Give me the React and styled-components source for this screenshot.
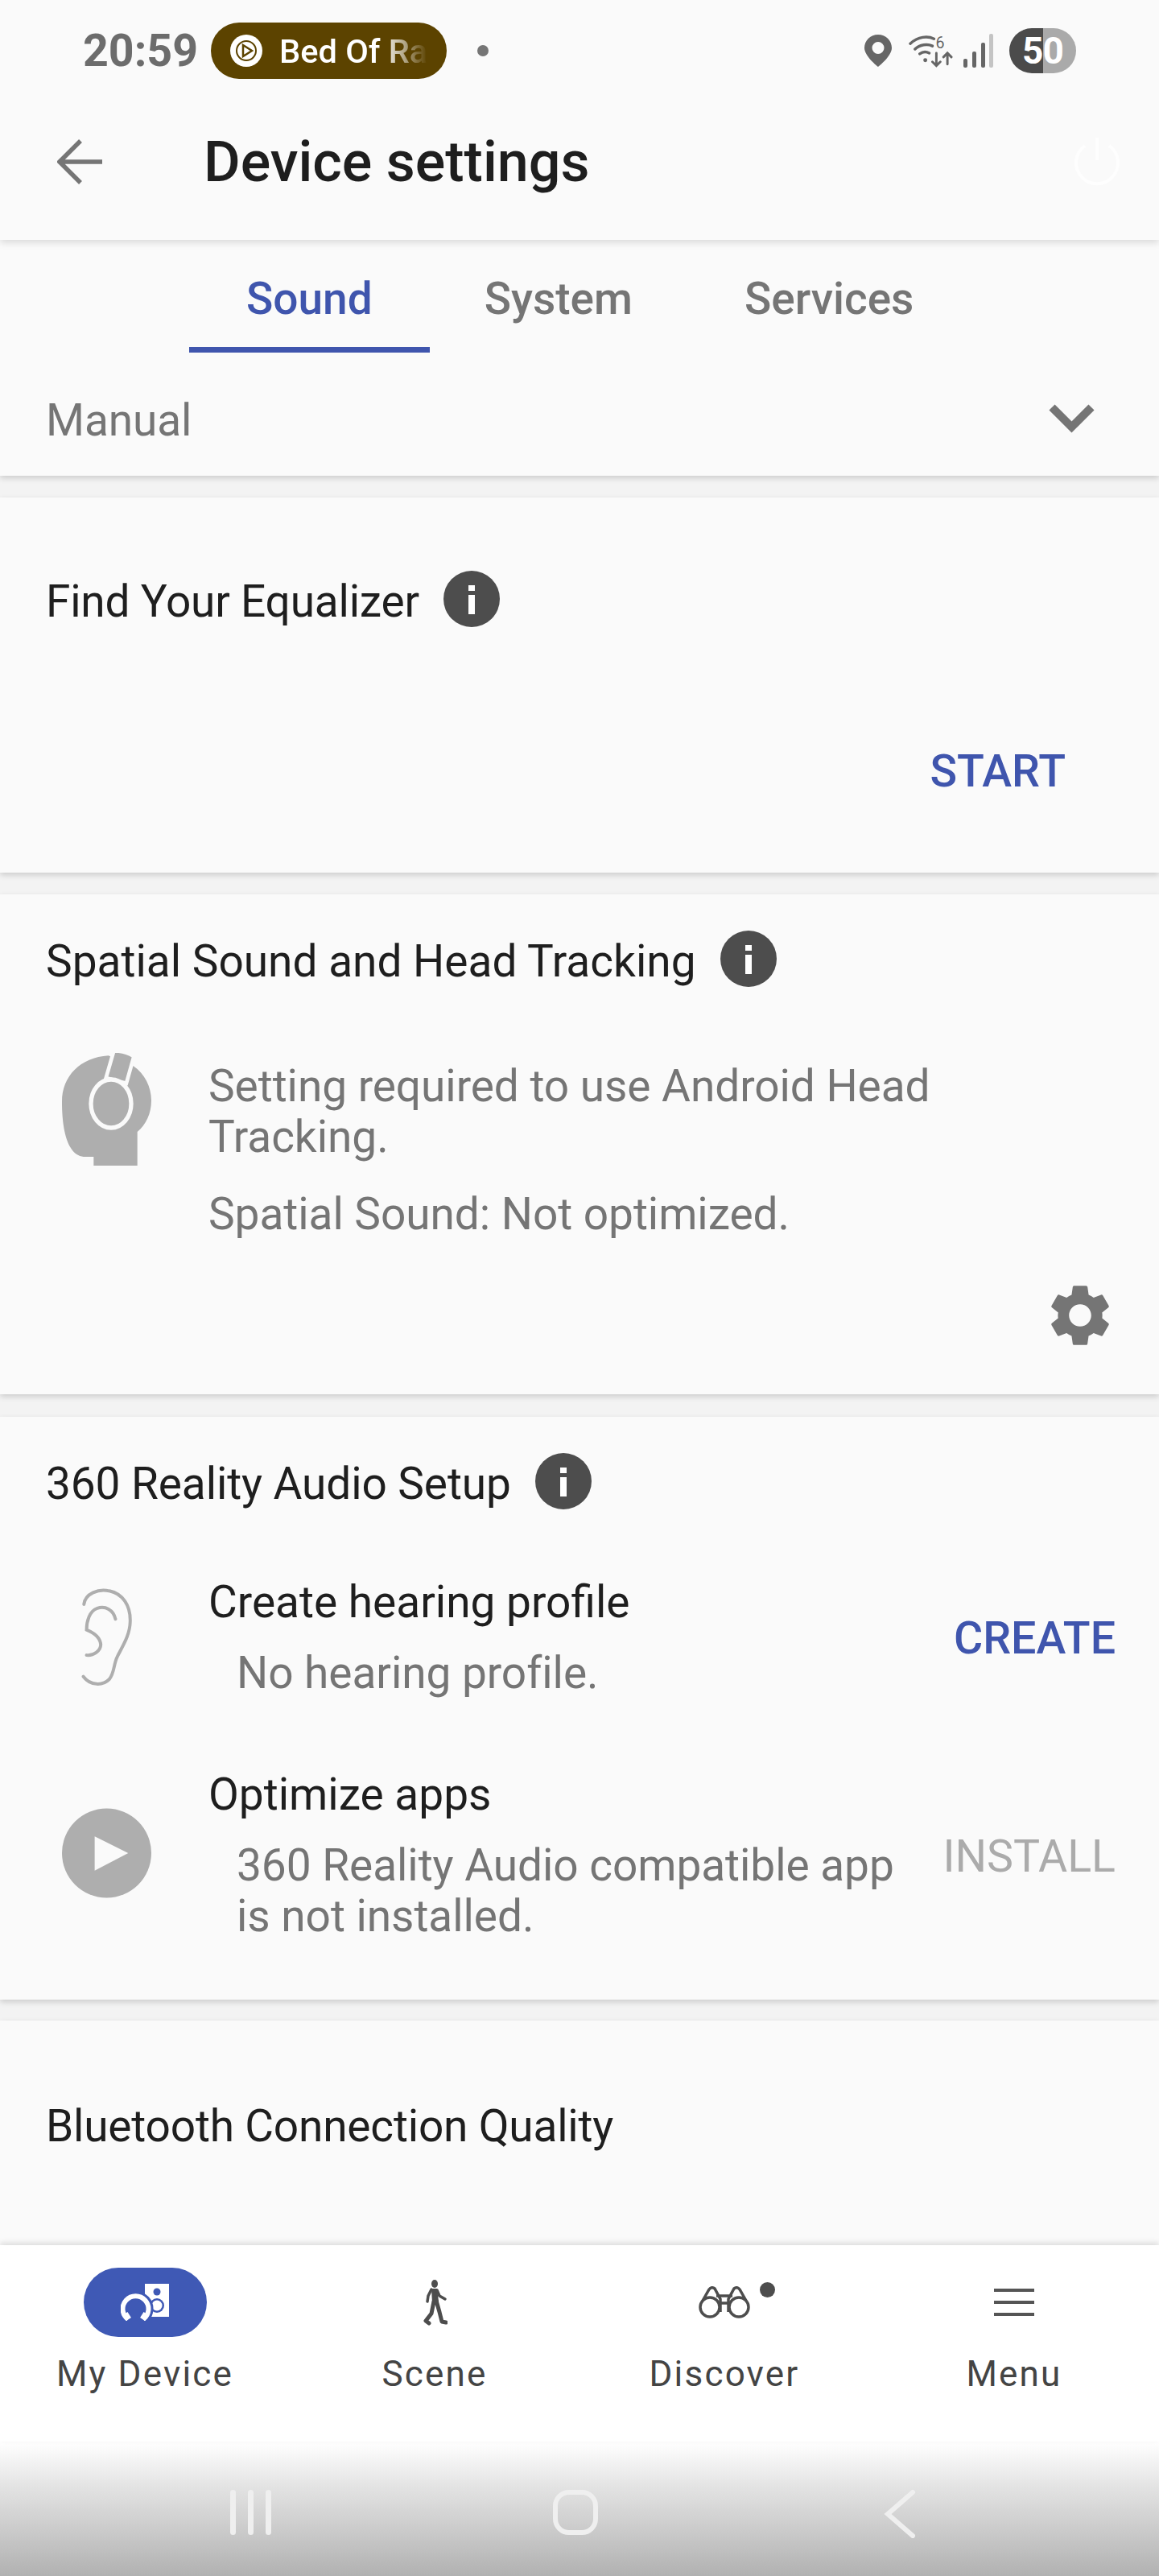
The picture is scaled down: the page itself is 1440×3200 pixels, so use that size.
import React from 'react';
import styled, { createGlobalStyle } from 'styled-components';
import { MdSettings } from 'react-icons/md';

const GlobalStyle = createGlobalStyle`
  html, body {
    margin: 0;
    padding: 0;
    background: #fafafa;
  }
  * {
    box-sizing: border-box;
  }
`;

const Screen = styled.div`
  width: 1440px;
  height: 3200px;
  display: flex;
  flex-direction: column;
  overflow: hidden;
  background: #f3f3f3;
  font-family: Roboto, "Liberation Sans", sans-serif;
`;

const TopArea = styled.header`
  height: 298px;
  padding-top: 28px;
  background: #fafafa;
  position: relative;
  z-index: 2;
  box-shadow: 0 3px 9px rgba(0, 0, 0, 0.14);
`;

const StatusBar = styled.div`
  height: 70px;
  display: flex;
  align-items: center;
  padding-left: 103px;
`;

const Clock = styled.span`
  width: 159px;
  font-size: 55.5px;
  font-weight: 700;
  color: #6c6c6c;
`;

const MediaChip = styled.div`
  width: 293px;
  height: 70px;
  border-radius: 35px;
  background: #5c4300;
  display: flex;
  align-items: center;
  padding-left: 24px;
  gap: 21px;
`;

const ChipIcon = styled.svg`
  width: 40px;
  height: 40px;
  flex: none;
`;

const ChipText = styled.div`
  white-space: nowrap;
  color: #fff;
  font-size: 41.5px;
  font-weight: 500;
  -webkit-mask-image: linear-gradient(to right, #000 68%, rgba(0, 0, 0, 0.55) 84%, transparent 100%);
  mask-image: linear-gradient(to right, #000 68%, rgba(0, 0, 0, 0.55) 84%, transparent 100%);
`;

const StatusDot = styled.span`
  width: 14px;
  height: 14px;
  margin-left: 38px;
  border-radius: 50%;
  background: #757575;
`;

const StatusIcons = styled.div`
  margin-left: auto;
  margin-right: 103px;
  display: flex;
  align-items: center;
`;

const WifiGlyph = styled.svg`
  width: 55px;
  height: 42px;
  margin-left: 21px;
`;

const SignalGlyph = styled.svg`
  width: 37px;
  height: 42px;
  margin-left: 13px;
`;

const Battery = styled.div`
  width: 83px;
  height: 56px;
  margin-left: 20px;
  border-radius: 28px;
  background: linear-gradient(to right, #4b4b4b 50%, #aaaaaa 50%);
  color: #fff;
  font-size: 46px;
  font-weight: 700;
  line-height: 56px;
  text-align: center;
  letter-spacing: -1px;
`;

const TitleBar = styled.div`
  height: 200px;
  display: flex;
  align-items: center;
  padding: 0 47px 0 71px;
`;

const BackArrow = styled.svg`
  width: 56px;
  height: 56px;
  margin-top: 5px;
  flex: none;
`;

const PageTitle = styled.h1`
  margin: 6px 0 0 126px;
  font-size: 70px;
  font-weight: 500;
  color: #1e1e1e;
`;

const PowerIcon = styled.svg`
  width: 60px;
  height: 62px;
  margin: 3px 0 0 auto;
`;

const Scroller = styled.main`
  flex: 1;
  min-height: 0;
  overflow: hidden;
`;

const SoundPanel = styled.section`
  background: #fafafa;
  box-shadow: 0 3px 7px rgba(0, 0, 0, 0.16);
`;

const TabRow = styled.nav`
  display: flex;
  padding-left: 235px;
`;

const Tab = styled.div`
  padding: 41px 71px 28px;
  border-bottom: 7px solid ${(p) => (p.$active ? '#3f55ad' : 'transparent')};
  color: ${(p) => (p.$active ? '#3f55ad' : '#757575')};
  font-size: 55px;
  font-weight: 500;
  line-height: 64px;

  & + & {
    margin-left: -3px;
  }
`;

const ModeRow = styled.div`
  display: flex;
  align-items: center;
  justify-content: space-between;
  padding: 52px 80px 37px 57px;
  color: #757575;
  font-size: 55px;
  line-height: 64px;
  letter-spacing: -0.1px;
`;

const Chevron = styled.svg`
  width: 57px;
  height: 36px;
  margin-top: -4px;
`;

const Card = styled.section`
  margin-top: ${(p) => p.$gap || 27}px;
  padding: ${(p) => p.$top}px ${(p) => p.$right || 54}px ${(p) => p.$bottom}px 57px;
  background: #fafafa;
  box-shadow: 0 3px 7px rgba(0, 0, 0, 0.16);
`;

const CardTitle = styled.div`
  display: flex;
  align-items: center;
  gap: 30px;
  color: #1e1e1e;
  font-size: 55px;
  line-height: 64px;
  letter-spacing: ${(p) => p.$track || 0}px;
`;

const InfoIcon = styled.svg`
  width: 70px;
  height: 70px;
  flex: none;
  margin-top: -6px;
`;

const StartAction = styled.div`
  margin: 148px 0 -2px;
  text-align: right;
  color: #3f55ad;
  font-size: 55.5px;
  font-weight: 500;
  line-height: 64px;
`;

const InfoRow = styled.div`
  display: flex;
  align-items: ${(p) => p.$align || 'center'};
  margin-top: ${(p) => p.$gap}px;
`;

const IconSlot = styled.div`
  width: 111px;
  margin: ${(p) => p.$lift || 0}px 71px 0 20px;
  flex: none;
  display: flex;
  justify-content: center;
`;

const InfoText = styled.div`
  flex: 1;
  min-width: 0;
  padding-top: ${(p) => p.$top || 0}px;
`;

const Note = styled.p`
  margin: ${(p) => p.$gap || 0}px 0 0;
  padding-left: ${(p) => (p.$indent ? 35 : 0)}px;
  max-width: ${(p) => (p.$indent ? 880 : 940)}px;
  color: #757575;
  font-size: 55px;
  line-height: 63px;
  letter-spacing: -0.05px;
`;

const RowTitle = styled.div`
  color: #1e1e1e;
  font-size: 55px;
  line-height: 64px;
`;

const RowAction = styled.div`
  flex: none;
  padding-top: 4px;
  color: ${(p) => (p.$disabled ? '#ababab' : '#3f55ad')};
  font-size: 55.5px;
  font-weight: ${(p) => (p.$disabled ? 400 : 500)};
  line-height: 64px;
`;

const GearRow = styled.div`
  display: flex;
  justify-content: flex-end;
  margin-top: 48px;
  color: #757575;
  margin-right: -2px;
  font-size: 92px;
  line-height: 0;
`;

const BottomNav = styled.footer`
  position: relative;
  z-index: 2;
  height: 244px;
  display: grid;
  grid-template-columns: repeat(4, 360px);
  background: #fff;
  box-shadow: 0 -3px 7px rgba(0, 0, 0, 0.12);
`;

const NavItem = styled.div`
  padding-top: 28px;
  display: flex;
  flex-direction: column;
  align-items: center;
  color: #444;
  font-size: 44px;
  line-height: 50px;
  letter-spacing: 2.2px;
`;

const NavIconSlot = styled.div`
  position: relative;
  width: 153px;
  height: 86px;
  margin-bottom: 21px;
  display: flex;
  align-items: center;
  justify-content: center;
  border-radius: 43px;
  background: ${(p) => (p.$active ? '#3f59b5' : 'transparent')};
`;

const NotifyDot = styled.span`
  position: absolute;
  top: 18px;
  right: 14px;
  width: 19px;
  height: 19px;
  border-radius: 50%;
  background: #4d4d4d;
`;

const SystemBar = styled.div`
  height: 167px;
  padding: 60px 0 0 110px;
  display: grid;
  grid-template-columns: repeat(3, 403px);
  justify-items: center;
  align-items: start;
  background: linear-gradient(to bottom, #fff 0%, #e2e2e2 35%, #b1b1b1 100%);
`;

const RecentBars = styled.div`
  height: 56px;
  display: flex;
  gap: 15px;
`;

const RecentBar = styled.span`
  width: 7px;
  border-radius: 4px;
  background: #efefef;
`;

const HomeButton = styled.div`
  width: 56px;
  height: 56px;
  border: 6px solid #efefef;
  border-radius: 20px;
`;

const BackGesture = styled.svg`
  width: 40px;
  height: 60px;
`;

const Info = () => (
  <InfoIcon viewBox="0 0 70 70">
    <circle cx="35" cy="35" r="35" fill="#4d4d4d" />
    <rect x="31" y="18" width="8" height="7" fill="#fff" />
    <rect x="31" y="30" width="8" height="24" fill="#fff" />
  </InfoIcon>
);

const HeadTracking = () => (
  <svg width="111" height="140" viewBox="232 203 333 420">
    <path
      fill="#aeaeae"
      d="M405 213C300 220 232 290 232 385C232 450 240 590 320 590L350 590L350 623L513 623L513 497C545 470 565 430 565 380C565 330 540 280 498 252Z"
    />
    <path fill="#aeaeae" stroke="#fafafa" strokeWidth="14" d="M425 196Q465 193 500 216L472 316L396 296Z" />
    <ellipse cx="415" cy="392" rx="75" ry="90" fill="#aeaeae" stroke="#fafafa" strokeWidth="16" />
  </svg>
);

const Ear = () => (
  <svg width="67" height="123" viewBox="300 205 200 370" fill="none" stroke="#aeaeae" strokeWidth="12" strokeLinecap="round">
    <path d="M315 265C320 225 370 205 410 215C460 225 490 270 488 330C487 380 460 420 440 460C425 490 430 520 410 545C385 570 340 570 313 535" />
    <path d="M433 320C425 285 395 270 365 280C335 290 325 330 325 360C350 370 375 385 378 415C378 440 350 458 325 455" />
  </svg>
);

const PlayBadge = () => (
  <svg width="112" height="112" viewBox="0 0 112 112">
    <circle cx="56" cy="56" r="56" fill="#aeaeae" />
    <path d="M41 35L83 56L41 78Z" fill="#fafafa" />
  </svg>
);

const DeviceGlyph = () => (
  <svg width="60" height="46" viewBox="0 0 60 46">
    <rect x="30" y="0" width="30" height="41" fill="#fff" />
    <circle cx="45" cy="10" r="4.5" fill="#3f59b5" />
    <circle cx="45" cy="27" r="9" fill="#3f59b5" />
    <circle cx="45" cy="27" r="6.5" fill="#fff" />
    <path d="M9 44A16 16 0 1 1 28 44" fill="none" stroke="#3f59b5" strokeWidth="12" />
    <path d="M9 44A16 16 0 1 1 28 44" fill="none" stroke="#fff" strokeWidth="6" />
    <path d="M5.5 37L10 44M31.5 37L27 44" fill="none" stroke="#fff" strokeWidth="7" />
  </svg>
);

const Walker = () => (
  <svg width="31" height="57" viewBox="0 0 31 57" fill="none" stroke="#4d4d4d" strokeLinecap="round" strokeLinejoin="round">
    <ellipse cx="15" cy="5" rx="4" ry="5" fill="#4d4d4d" stroke="none" />
    <path d="M11 11L18 11L20 27L12 28Z" fill="#4d4d4d" stroke="none" />
    <path strokeWidth="3.5" d="M18 13L21 20L28 24M11 12L7 20L6 27" />
    <path strokeWidth="5" d="M17 26L21 40L24 52L29 53M14 27L11 42L4 51L8 54" />
  </svg>
);

const Binoculars = () => (
  <svg width="64" height="40" viewBox="0 0 64 40" fill="none" stroke="#4d4d4d" strokeWidth="3.5">
    <circle cx="14" cy="26" r="12" />
    <circle cx="50" cy="26" r="12" />
    <path d="M5 18L13 4Q16 0 20 3L27 16V32M59 18L51 4Q48 0 44 3L37 16V32M22 12H42M27 21H37" />
  </svg>
);

const MenuLines = () => (
  <svg width="50" height="34" viewBox="0 0 50 34" fill="#555">
    <rect y="0" width="50" height="4" />
    <rect y="15" width="50" height="4" />
    <rect y="30" width="50" height="4" />
  </svg>
);

export default function App() {
  return (
    <Screen>
      <GlobalStyle />
      <TopArea>
        <StatusBar>
          <Clock>20:59</Clock>
          <MediaChip>
            <ChipIcon viewBox="0 0 40 40">
              <circle cx="20" cy="20" r="20" fill="#fff" />
              <circle cx="20" cy="20" r="12" fill="none" stroke="#5c4300" strokeWidth="2" />
              <path d="M16 13L27 20L16 27Z" fill="none" stroke="#5c4300" strokeWidth="2.5" />
            </ChipIcon>
            <ChipText>Bed Of Ra</ChipText>
          </MediaChip>
          <StatusDot />
          <StatusIcons>
            <svg width="34" height="40" viewBox="0 0 34 40">
              <path fillRule="evenodd" fill="#666" d="M17 0C7.6 0 0 7.4 0 16.5C0 27 17 40 17 40S34 27 34 16.5C34 7.4 26.4 0 17 0ZM17 9A7.5 7.5 0 1 1 17 24A7.5 7.5 0 0 1 17 9Z" />
            </svg>
            <WifiGlyph viewBox="0 0 56 42" fill="none" stroke="#666" strokeLinecap="round">
              <path strokeWidth="3.5" d="M2 12C12 3 24 2 32 6M8 19C14 13 24 12 30 15M14 25C18 22 22 22 26 24" />
              <circle cx="21" cy="33" r="2.5" fill="#666" stroke="none" />
              <text x="34" y="18" fontSize="20" fontFamily="Roboto, sans-serif" fill="#666" stroke="none">6</text>
              <path strokeWidth="3" d="M35 24V40M30 35L35 40L40 35M49 38V24M44 29L49 24L54 29" />
            </WifiGlyph>
            <SignalGlyph viewBox="0 0 37 42">
              <rect x="0" y="31" width="5" height="11" rx="2" fill="#666" />
              <rect x="11" y="22" width="5" height="20" rx="2" fill="#666" />
              <rect x="22" y="11" width="5" height="31" rx="2" fill="#666" />
              <rect x="32" y="0" width="5" height="42" rx="2" fill="#c4c4c4" />
            </SignalGlyph>
            <Battery>50</Battery>
          </StatusIcons>
        </StatusBar>
        <TitleBar>
          <BackArrow viewBox="0 0 56 56" fill="none" stroke="#757575" strokeWidth="5.5">
            <path d="M56 28H4M29 2L3 28L29 54" />
          </BackArrow>
          <PageTitle>Device settings</PageTitle>
          <PowerIcon viewBox="0 0 60 62" fill="none" stroke="#fefefe" strokeWidth="4">
            <path d="M30 2V30M15 12A26 26 0 1 0 45 12" />
          </PowerIcon>
        </TitleBar>
      </TopArea>

      <Scroller>
        <SoundPanel>
          <TabRow>
            <Tab $active>Sound</Tab>
            <Tab>System</Tab>
            <Tab>Services</Tab>
          </TabRow>
          <ModeRow>
            Manual
            <Chevron viewBox="0 0 57 36" fill="none" stroke="#757575" strokeWidth="10">
              <path d="M4 4L28.5 28.5L53 4" />
            </Chevron>
          </ModeRow>
        </SoundPanel>

        <Card $top={97} $bottom={95} $right={116}>
          <CardTitle $track={-0.2}>
            Find Your Equalizer
            <Info />
          </CardTitle>
          <StartAction>START</StartAction>
        </Card>

        <Card $gap={27} $top={51} $bottom={52}>
          <CardTitle>
            Spatial Sound and Head Tracking
            <Info />
          </CardTitle>
          <InfoRow $gap={82} $align="flex-start">
            <IconSlot>
              <HeadTracking />
            </IconSlot>
            <InfoText $top={10}>
              <Note>Setting required to use Android Head Tracking.</Note>
              <Note $gap={33}>Spatial Sound: Not optimized.</Note>
            </InfoText>
          </InfoRow>
          <GearRow>
            <MdSettings />
          </GearRow>
        </Card>

        <Card $gap={28} $top={51} $bottom={72}>
          <CardTitle $track={-0.1}>
            360 Reality Audio Setup
            <Info />
          </CardTitle>
          <InfoRow $gap={83}>
            <IconSlot>
              <Ear />
            </IconSlot>
            <InfoText>
              <RowTitle>Create hearing profile</RowTitle>
              <Note $indent $gap={25}>No hearing profile.</Note>
            </InfoText>
            <RowAction>CREATE</RowAction>
          </InfoRow>
          <InfoRow $gap={87}>
            <IconSlot $lift={-6}>
              <PlayBadge />
            </IconSlot>
            <InfoText>
              <RowTitle>Optimize apps</RowTitle>
              <Note $indent $gap={25}>360 Reality Audio compatible app is not installed.</Note>
            </InfoText>
            <RowAction $disabled>INSTALL</RowAction>
          </InfoRow>
        </Card>

        <Card $gap={26} $top={99} $bottom={260}>
          <CardTitle $track={-0.2}>Bluetooth Connection Quality</CardTitle>
        </Card>
      </Scroller>

      <BottomNav>
        <NavItem>
          <NavIconSlot $active>
            <DeviceGlyph />
          </NavIconSlot>
          My Device
        </NavItem>
        <NavItem>
          <NavIconSlot>
            <Walker />
          </NavIconSlot>
          Scene
        </NavItem>
        <NavItem>
          <NavIconSlot>
            <Binoculars />
            <NotifyDot />
          </NavIconSlot>
          Discover
        </NavItem>
        <NavItem>
          <NavIconSlot>
            <MenuLines />
          </NavIconSlot>
          Menu
        </NavItem>
      </BottomNav>

      <SystemBar>
        <RecentBars>
          <RecentBar />
          <RecentBar />
          <RecentBar />
        </RecentBars>
        <HomeButton />
        <BackGesture viewBox="0 0 40 60" fill="none" stroke="#efefef" strokeWidth="6" strokeLinecap="round">
          <path d="M36 3L5 30L36 57" />
        </BackGesture>
      </SystemBar>
    </Screen>
  );
}
